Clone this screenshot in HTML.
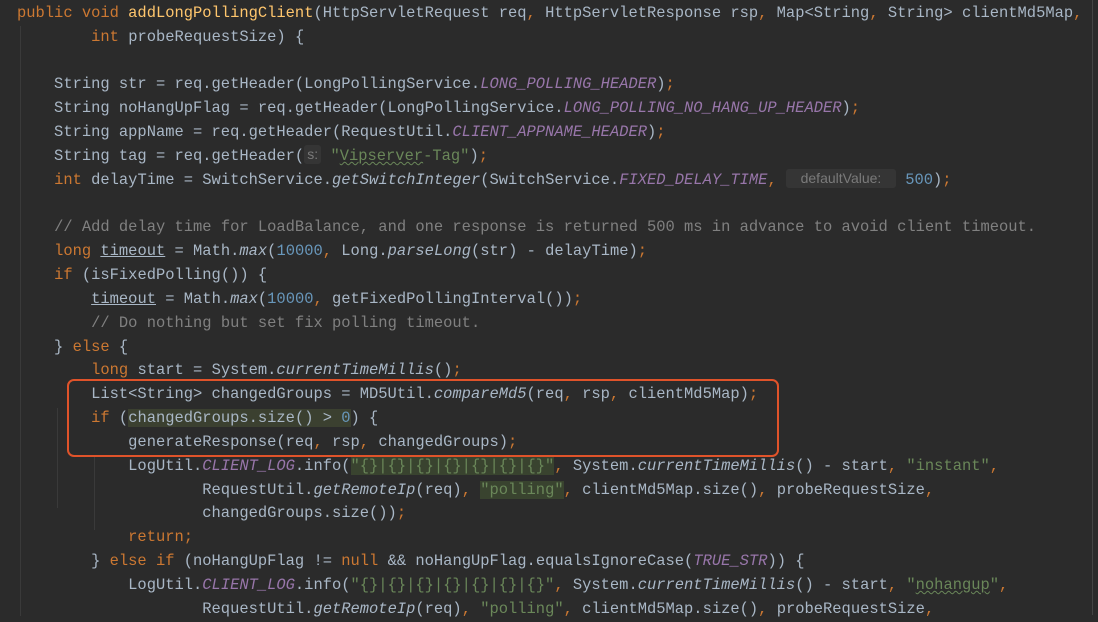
<!DOCTYPE html>
<html><head><meta charset="utf-8"><style>
html,body{margin:0;padding:0;background:#2b2b2b;width:1098px;height:615px;overflow:hidden}
pre{margin:0;position:absolute;left:17px;top:2px;font-family:"Liberation Mono",monospace;font-size:15.45px;line-height:23.83px;color:#a9b7c6;white-space:pre}
.k{color:#cc7832}.f{color:#9876aa;font-style:italic}.i{font-style:italic}.s{color:#6a8759}.n{color:#6897bb}.c{color:#808080}.d{color:#ffc66d}
.h{display:inline-block;background:#353535;color:#7a7a7a;font-family:"Liberation Sans",sans-serif;font-size:14px;line-height:19px;border-radius:3px;vertical-align:1px;text-align:center}
.hl{background:#3b4030}.sh{background:#39432f}
.u{text-decoration:underline}
.w{text-decoration:underline wavy #6a8759 1px}
.box{position:absolute;left:67px;top:379px;width:708px;height:74px;border:2.5px solid #e0532a;border-radius:7px}
.g{position:absolute;width:1px;background:#3a3a3a}
</style></head><body>
<div class="g" style="left:20px;top:26px;height:590px"></div>
<div class="g" style="left:57px;top:408px;height:100px"></div>
<div class="g" style="left:94px;top:455px;height:75px"></div>
<div class="g" style="left:1092px;top:0;height:615px;background:#444"></div>
<pre><span class="k">public void </span><span class="d">addLongPollingClient</span>(HttpServletRequest req<span class="k">, </span>HttpServletResponse rsp<span class="k">, </span>Map&lt;String<span class="k">, </span>String&gt; clientMd5Map<span class="k">,</span>
        <span class="k">int </span>probeRequestSize) {

    String str = req.getHeader(LongPollingService.<span class="f">LONG_POLLING_HEADER</span>)<span class="k">;</span>
    String noHangUpFlag = req.getHeader(LongPollingService.<span class="f">LONG_POLLING_NO_HANG_UP_HEADER</span>)<span class="k">;</span>
    String appName = req.getHeader(RequestUtil.<span class="f">CLIENT_APPNAME_HEADER</span>)<span class="k">;</span>
    String tag = req.getHeader(<span class="h" style="width:17px">s:</span> <span class="s">"<span class="w">Vipserver</span>-Tag"</span>)<span class="k">;</span>
    <span class="k">int </span>delayTime = SwitchService.<span class="i">getSwitchInteger</span>(SwitchService.<span class="f">FIXED_DELAY_TIME</span><span class="k">, </span><span class="h" style="width:110px">defaultValue:</span> <span class="n">500</span>)<span class="k">;</span>

    <span class="c">// Add delay time for LoadBalance, and one response is returned 500 ms in advance to avoid client timeout.</span>
    <span class="k">long </span><span class="u">timeout</span> = Math.<span class="i">max</span>(<span class="n">10000</span><span class="k">, </span>Long.<span class="i">parseLong</span>(str) - delayTime)<span class="k">;</span>
    <span class="k">if </span>(isFixedPolling()) {
        <span class="u">timeout</span> = Math.<span class="i">max</span>(<span class="n">10000</span><span class="k">, </span>getFixedPollingInterval())<span class="k">;</span>
        <span class="c">// Do nothing but set fix polling timeout.</span>
    } <span class="k">else </span>{
        <span class="k">long </span>start = System.<span class="i">currentTimeMillis</span>()<span class="k">;</span>
        List&lt;String&gt; changedGroups = MD5Util.<span class="i">compareMd5</span>(req<span class="k">, </span>rsp<span class="k">, </span>clientMd5Map)<span class="k">;</span>
        <span class="k">if </span>(<span class="hl">changedGroups.size() &gt; <span class="n">0</span></span>) {
            generateResponse(req<span class="k">, </span>rsp<span class="k">, </span>changedGroups)<span class="k">;</span>
            LogUtil.<span class="f">CLIENT_LOG</span>.info(<span class="s sh">"{}|{}|{}|{}|{}|{}|{}"</span><span class="k">, </span>System.<span class="i">currentTimeMillis</span>() - start<span class="k">, </span><span class="s">"instant"</span><span class="k">,</span>
                    RequestUtil.<span class="i">getRemoteIp</span>(req)<span class="k">, </span><span class="s sh">"polling"</span><span class="k">, </span>clientMd5Map.size()<span class="k">, </span>probeRequestSize<span class="k">,</span>
                    changedGroups.size())<span class="k">;</span>
            <span class="k">return;</span>
        } <span class="k">else if </span>(noHangUpFlag != <span class="k">null </span>&amp;&amp; noHangUpFlag.equalsIgnoreCase(<span class="f">TRUE_STR</span>)) {
            LogUtil.<span class="f">CLIENT_LOG</span>.info(<span class="s">"{}|{}|{}|{}|{}|{}|{}"</span><span class="k">, </span>System.<span class="i">currentTimeMillis</span>() - start<span class="k">, </span><span class="s">"<span class="w">nohangup</span>"</span><span class="k">,</span>
                    RequestUtil.<span class="i">getRemoteIp</span>(req)<span class="k">, </span><span class="s">"polling"</span><span class="k">, </span>clientMd5Map.size()<span class="k">, </span>probeRequestSize<span class="k">,</span></pre>
<div class="box"></div>
</body></html>
